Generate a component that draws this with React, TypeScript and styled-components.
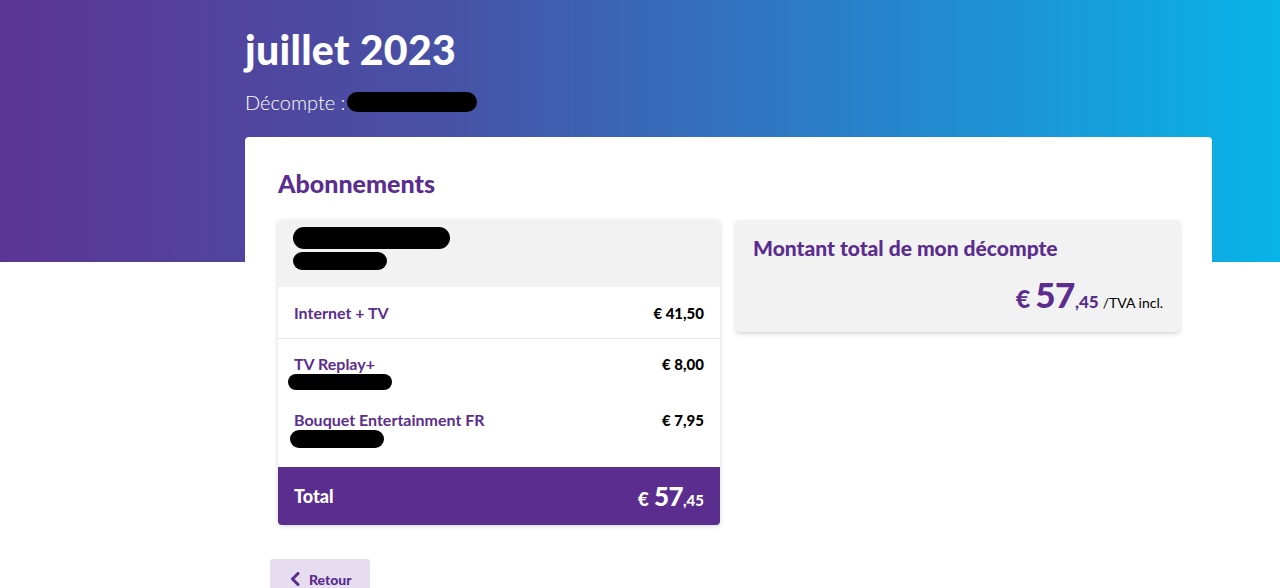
import React from "react";
import styled, { createGlobalStyle } from "styled-components";

const Global = createGlobalStyle`
  html, body { margin: 0; padding: 0; background: #ffffff; }
  body { font-family: Lato, "Open Sans", "Noto Sans", sans-serif; color: #000; }
  * { box-sizing: border-box; }
`;

const purple = "#5a2d8e";

const Page = styled.div`
  min-height: 588px;
  background: linear-gradient(90deg, #5c3596 0%, #4752a6 35%, #2a7ec8 65%, #08b4e8 100%) top left / 100% 262px no-repeat;
  padding-left: 245px;
  padding-top: 26px;
`;

const Title = styled.h1`
  margin: 0;
  color: #fff;
  font-size: 41px;
  font-weight: 900;
  line-height: 48px;
  letter-spacing: 0.3px;
`;

const Subtitle = styled.div`
  display: flex;
  align-items: center;
  margin-top: 15px;
  color: #fff;
  font-size: 20px;
  font-weight: 300;
  line-height: 26px;
`;

const Blob = styled.span<{ $w: number; $h: number }>`
  display: inline-block;
  width: ${(p) => p.$w}px;
  height: ${(p) => p.$h}px;
  background: #000;
  border-radius: ${(p) => p.$h / 2}px;
`;

const Card = styled.section`
  width: 967px;
  margin-top: 22px;
  background: #fff;
  border-radius: 4px 4px 0 0;
  padding: 32px 32px 34px 33px;
`;

const SectionTitle = styled.h2`
  margin: 0 0 22px;
  color: ${purple};
  font-size: 25px;
  font-weight: 900;
  line-height: 29px;
`;

const Columns = styled.div`
  display: grid;
  grid-template-columns: 442px 444px;
  gap: 16px;
  align-items: start;
`;

const Panel = styled.div`
  border-radius: 4px;
  box-shadow: 0 1px 5px rgba(0, 0, 0, 0.16);
  overflow: hidden;
  background: #fff;
`;

const PanelHead = styled.div`
  background: #f2f2f2;
  height: 67px;
  padding: 7px 15px;
  display: flex;
  flex-direction: column;
  gap: 3px;
`;

const Row = styled.div<{ $border?: boolean; $h: number }>`
  display: flex;
  justify-content: space-between;
  align-items: flex-start;
  height: ${(p) => p.$h}px;
  padding: 0 16px;
  border-bottom: ${(p) => (p.$border ? "1px solid #e6e6e6" : "none")};
`;

const RowLabel = styled.div`
  display: flex;
  flex-direction: column;
  color: ${purple};
  font-size: 16px;
  font-weight: 700;
  line-height: 20px;
`;

const Price = styled.div`
  font-size: 15px;
  font-weight: 900;
  line-height: 20px;
  color: #000;
`;

const TotalBar = styled.div`
  background: ${purple};
  height: 58px;
  padding: 0 16px;
  display: flex;
  align-items: center;
  justify-content: space-between;
  color: #fff;
  font-weight: 900;
`;

const TotalLabel = styled.span`
  font-size: 18px;
`;

const Amount = styled.span<{ $big: number; $small: number; $cur: number }>`
  display: inline-flex;
  align-items: baseline;
  font-weight: 900;
  .cur { font-size: ${(p) => p.$cur}px; margin-right: 5px; }
  .int { font-size: ${(p) => p.$big}px; letter-spacing: -0.5px; }
  .dec { font-size: ${(p) => p.$small}px; }
`;

const SummaryCard = styled.div`
  background: #f2f2f2;
  border-radius: 4px;
  box-shadow: 0 2px 4px rgba(0, 0, 0, 0.16);
  height: 112px;
  padding: 15px 17px 0 17px;
  display: flex;
  flex-direction: column;
`;

const SummaryTitle = styled.div`
  color: ${purple};
  font-size: 21px;
  font-weight: 900;
  line-height: 26px;
`;

const SummaryPrice = styled.div`
  margin-top: 12px;
  display: flex;
  justify-content: flex-end;
  align-items: baseline;
  color: ${purple};
`;

const Tva = styled.span`
  color: #000;
  font-size: 14px;
  font-weight: 400;
  margin-left: 4px;
`;

const BackButton = styled.button`
  margin: 0 0 0 25px;
  width: 100px;
  height: 40px;
  border: none;
  border-radius: 3px 3px 0 0;
  background: #e6ddf0;
  color: ${purple};
  font-family: inherit;
  font-size: 14px;
  font-weight: 900;
  display: flex;
  align-items: center;
  gap: 9px;
  padding: 0 0 0 20px;
`;

export default function App() {
  return (
    <>
      <Global />
      <Page>
        <Title>juillet 2023</Title>
        <Subtitle>
          Décompte :&nbsp;<Blob $w={130} $h={20} style={{ marginLeft: -4 }} />
        </Subtitle>
        <Card>
          <SectionTitle>Abonnements</SectionTitle>
          <Columns>
            <Panel>
              <PanelHead>
                <Blob $w={157} $h={22} />
                <Blob $w={94} $h={18} />
              </PanelHead>
              <Row $border $h={52} style={{ alignItems: "center" }}>
                <RowLabel>Internet + TV</RowLabel>
                <Price>€ 41,50</Price>
              </Row>
              <Row $h={56} style={{ paddingTop: 15 }}>
                <RowLabel>
                  TV Replay+
                  <Blob $w={104} $h={16} style={{ marginLeft: -6, marginTop: 0 }} />
                </RowLabel>
                <Price>€ 8,00</Price>
              </Row>
              <Row $h={72} style={{ paddingTop: 15 }}>
                <RowLabel>
                  Bouquet Entertainment FR
                  <Blob $w={94} $h={18} style={{ marginLeft: -4 }} />
                </RowLabel>
                <Price>€ 7,95</Price>
              </Row>
              <TotalBar>
                <TotalLabel>Total</TotalLabel>
                <Amount $cur={19} $big={26} $small={15}>
                  <span className="cur">€</span>
                  <span className="int">57</span>
                  <span className="dec">,45</span>
                </Amount>
              </TotalBar>
            </Panel>
            <SummaryCard>
              <SummaryTitle>Montant total de mon décompte</SummaryTitle>
              <SummaryPrice>
                <Amount $cur={25} $big={35} $small={17}>
                  <span className="cur">€</span>
                  <span className="int">57</span>
                  <span className="dec">,45</span>
                </Amount>
                <Tva>/TVA incl.</Tva>
              </SummaryPrice>
            </SummaryCard>
          </Columns>
        </Card>
        <BackButton>
          <svg width="10" height="14" viewBox="0 0 10 14">
            <path d="M8 1.5 L2.5 7 L8 12.5" fill="none" stroke={purple} strokeWidth="3" strokeLinecap="round" strokeLinejoin="round" />
          </svg>
          Retour
        </BackButton>
      </Page>
    </>
  );
}
